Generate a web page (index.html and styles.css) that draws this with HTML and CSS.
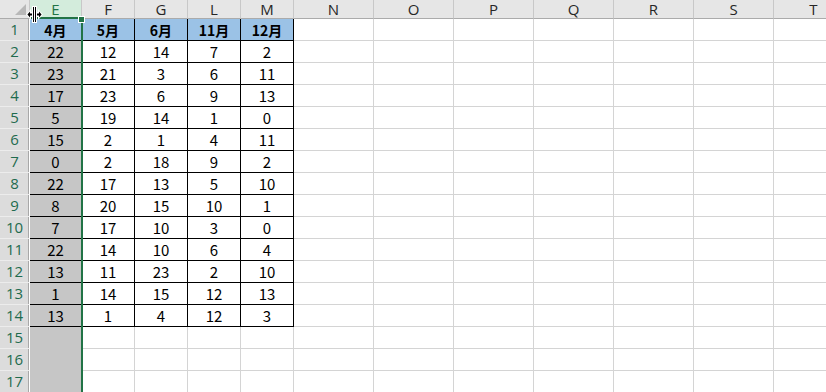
FILE: index.html
```html
<!DOCTYPE html>
<html lang="en">
<head>
  <meta charset="UTF-8">
  <title>Sheet1</title>
  <link rel="stylesheet" href="styles.css">
</head>
<body>
  <div class="sheet">
    <div class="grid" id="grid"></div>
    <div class="selection">
      <span class="handle"></span>
    </div>
    <svg class="cursor" width="19" height="17" viewBox="0 0 19 17">
      <path d="M7 0h5v6h1V3l5 5.5-5 5.5v-3h-1v6H7v-6H6v3L1 8.5 6 3v3h1z" fill="#fff"/>
      <path d="M8 1h1v15H8zM10 1h1v15h-1zM2.4 8.5L5 5.5v2h2v2H5v2zM16.6 8.5L14 5.5v2h-2v2h2v2z" fill="#000"/>
    </svg>
  </div>
  <script>
    // column letters and month headers
    const cols = ['E', 'F', 'G', 'L', 'M', 'N', 'O', 'P', 'Q', 'R', 'S', 'T'];
    const months = ['4月', '5月', '6月', '11月', '12月'];
    const data = [
      [22, 12, 14, 7, 2],
      [23, 21, 3, 6, 11],
      [17, 23, 6, 9, 13],
      [5, 19, 14, 1, 0],
      [15, 2, 1, 4, 11],
      [0, 2, 18, 9, 2],
      [22, 17, 13, 5, 10],
      [8, 20, 15, 10, 1],
      [7, 17, 10, 3, 0],
      [22, 14, 10, 6, 4],
      [13, 11, 23, 2, 10],
      [1, 14, 15, 12, 13],
      [13, 1, 4, 12, 3]
    ];
    const grid = document.getElementById('grid');

    function cell(cls, text) {
      const div = document.createElement('div');
      div.className = cls;
      if (text !== undefined) div.textContent = text;
      grid.appendChild(div);
    }

    // header row
    cell('corner');
    cols.forEach((c, i) => cell(i === 0 ? 'col-head active' : 'col-head', c));

    // body rows
    for (let r = 1; r <= 17; r++) {
      cell('row-head', r);
      cols.forEach((c, i) => {
        let cls = 'cell';
        let text = '';
        if (i < 5 && r <= 14) {
          cls += ' boxed';
          if (r === 1) {
            cls += ' title';
            text = months[i];
          } else {
            text = data[r - 2][i];
          }
        }
        if (i === 0 && r > 1) cls += ' picked';
        cell(cls, text);
      });
    }
  </script>
</body>
</html>
```

FILE: styles.css
```css
body {
  margin: 0;
  background: #fff;
  font-family: 'Noto Sans CJK SC', 'Noto Sans', sans-serif;
  overflow: hidden;
}
.sheet {
  position: relative;
  width: 826px;
  height: 392px;
  overflow: hidden;
}
.grid {
  display: grid;
  grid-template-columns: 30px 52px 53px 53px 53px 53px repeat(7, 80px);
  grid-template-rows: 19px repeat(17, 22px);
}
.grid > div {
  box-sizing: border-box;
  display: flex;
  align-items: center;
  justify-content: center;
  border-right: 1px solid #d4d4d4;
  border-bottom: 1px solid #d4d4d4;
  font-size: 15px;
  color: #000;
  line-height: 1;
}
.corner {
  background: #e6e6e6;
  border-bottom-color: #ababab !important;
  border-right-color: #c8c8c8 !important;
  position: relative;
}
.corner::after {
  content: '';
  position: absolute;
  right: 3px;
  bottom: 3px;
  border-left: 11px solid transparent;
  border-bottom: 11px solid #b8b8b8;
}
.col-head {
  background: #e6e6e6;
  border-right-color: #c8c8c8 !important;
  border-bottom-color: #ababab !important;
  font-family: 'Open Sans', 'Noto Sans', sans-serif;
  color: #262626 !important;
  padding-top: 1px;
}
.col-head.active {
  background: #d3ecdc;
  color: #217346 !important;
}
.row-head {
  background: #dcdcdc;
  border-right: 1px solid #fff !important;
  border-bottom-color: #ececec !important;
  font-family: 'Open Sans', 'Noto Sans', sans-serif;
  color: #1f6b4e !important;
  box-shadow: inset -1px 0 0 #a8a8a8;
}
.cell.picked {
  background: #c6c6c6;
  border-bottom-color: #c6c6c6;
}
.cell.boxed {
  border-right-color: #000;
  border-bottom-color: #000;
}
.cell.title {
  background: #9bc2e6;
  font-weight: bold;
  font-size: 14px;
}
.selection {
  position: absolute;
  left: 30px;
  top: 17px;
  width: 53px;
  height: 380px;
  box-sizing: border-box;
  border-top: 2px solid #217346;
  border-right: 2px solid #217346;
}
.handle {
  position: absolute;
  right: -4px;
  top: -3px;
  width: 5px;
  height: 5px;
  background: #217346;
  border: 1px solid #fff;
}
.cursor {
  position: absolute;
  left: 25px;
  top: 6px;
}
```
